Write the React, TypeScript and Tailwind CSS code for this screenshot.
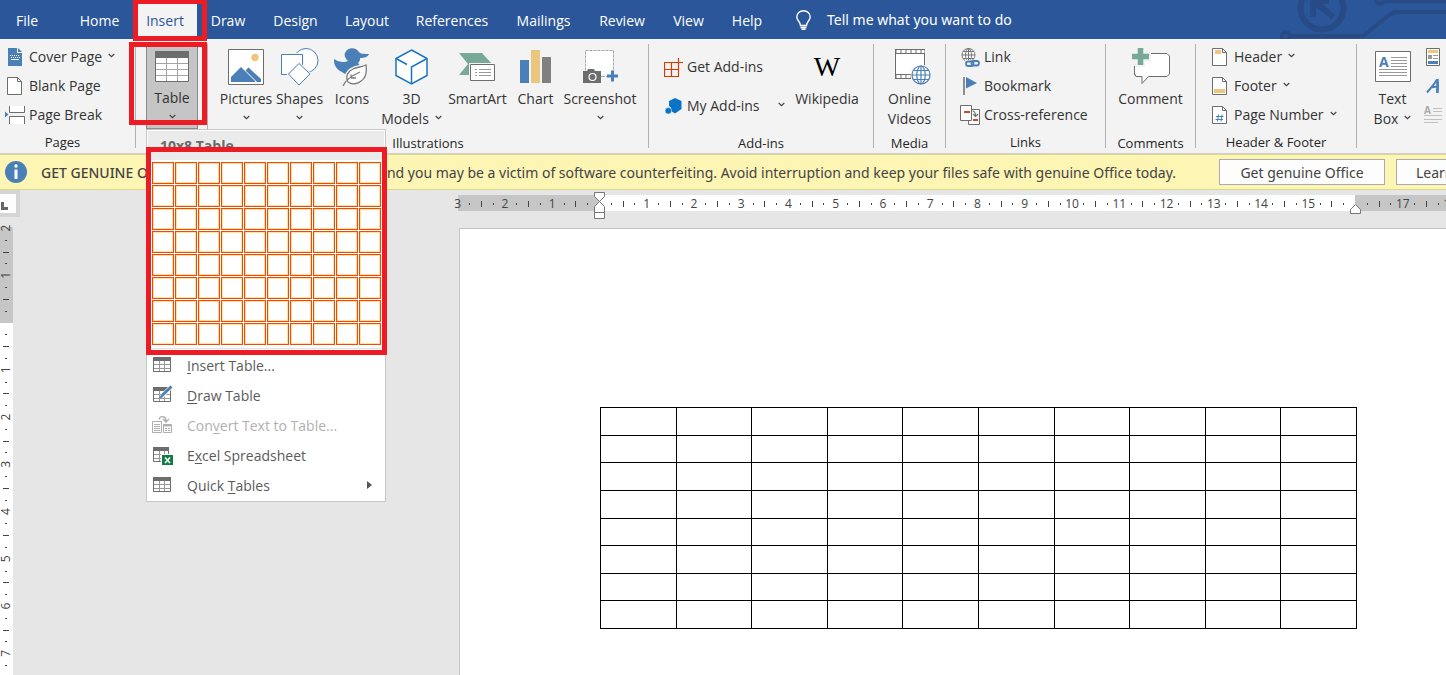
import React from "react";

type Kids = { children?: React.ReactNode };

const GREY = "#6d6d6d";
const BLUE = "#4a7fb8";
const AMBER = "#edc57c";
const GREEN = "#77a898";

function Chevron() {
  return (
    <svg className="mb-1" width="7" height="5" viewBox="0 0 7 5" fill="none" stroke="#444" strokeWidth="1.2" aria-hidden="true">
      <path d="M.7 1 3.5 3.6 6.3 1" />
    </svg>
  );
}

function Group({ label, className, children }: Kids & { label: string; className: string }) {
  return (
    <section aria-label={label || "Tables"} className={`relative my-[5px] flex shrink-0 flex-col border-[#b1b1b1] ${className}`}>
      <div className="flex h-[85px]">{children}</div>
      <div className="mt-1 text-center text-[13px] leading-5 text-[#262626]">{label}</div>
    </section>
  );
}

function BigButton({
  icon,
  lines,
  className,
  arrow,
}: {
  icon: React.ReactNode;
  lines: string[];
  className: string;
  arrow?: boolean;
}) {
  return (
    <button type="button" className={`flex shrink-0 flex-col items-center leading-5 ${className}`}>
      <span className="flex h-[45px] items-center">{icon}</span>
      <span>{lines[0]}</span>
      <span className="flex h-5 items-center gap-1.5">
        {lines[1] && <span>{lines[1]}</span>}
        {arrow && <Chevron />}
      </span>
    </button>
  );
}

function SmallButton({ icon, text, arrow }: { icon: React.ReactNode; text: string; arrow?: boolean }) {
  return (
    <button type="button" className="flex h-[26px] items-center gap-1 leading-5">
      <span className="flex w-5 justify-center">{icon}</span>
      <span>{text}</span>
      {arrow && (
        <span className="ml-0.5">
          <Chevron />
        </span>
      )}
    </button>
  );
}

function CoverPageIcon() {
  return (
    <svg width="14" height="18" viewBox="0 0 14 18">
      <path d="M0 0h9v5h5v13H0z" fill={BLUE} />
      <path d="M10 0l4 4h-4z" fill={BLUE} />
      <path d="M2 7.500h10M3 9.500h10" stroke="#fff" strokeDasharray="1 1" />
      <path d="M3 11.500h8" stroke="#fff" />
    </svg>
  );
}

function PageIcon({ children }: Kids) {
  return (
    <svg width="16" height="18" viewBox="0 0 16 18">
      <path d="M.5.5h10l4 4v13H.5z" fill="#fff" stroke={GREY} />
      <path d="M10.500.5v4h4" fill="none" stroke={GREY} />
      {children}
    </svg>
  );
}

function PageBreakIcon() {
  return (
    <svg width="20" height="18" viewBox="0 0 20 18">
      <path d="M0 5.500v6l3.500-3z" fill={BLUE} />
      <path d="M4.500 0v6.500h15V0M4.500 18v-7.500h15V18" fill="#fff" stroke={GREY} />
    </svg>
  );
}

function TableIcon() {
  return (
    <svg width="34" height="31" viewBox="0 0 34 31">
      <path d="M.5.500h33v30H.5z" fill="#fff" stroke={GREY} />
      <path d="M0 0h34v7H0z" fill={GREY} />
      <path d="M1 12.500h32M1 18.500h32M1 24.500h32M11.500 7v23M22.500 7v23" stroke="#a6a6a6" />
    </svg>
  );
}

function PicturesIcon() {
  return (
    <svg width="36" height="36" viewBox="0 0 36 36">
      <path d="M.5.500h35v35H.5z" fill="#fff" stroke={GREY} />
      <circle cx="27" cy="8.500" r="3.700" fill={AMBER} />
      <path d="M3 32v-4l10-10 14 14v1H3z" fill={BLUE} />
      <path d="M17.500 21.500l3-3L33 30v3h-4z" fill={BLUE} />
    </svg>
  );
}

function ShapesIcon() {
  return (
    <svg width="38" height="38" viewBox="0 0 38 38" fill="#fff" stroke={BLUE}>
      <circle cx="25" cy="12.500" r="12" />
      <path d="M.5 6.500h21v20H.5z" stroke="#f3f3f3" strokeWidth="3" />
      <path d="M.5 6.500h21v20H.5z" />
      <path d="M18 15.500l11 10.500-11 11L7.500 26z" stroke="#f3f3f3" strokeWidth="3" />
      <path d="M18 15.500l11 10.500-11 11L7.500 26z" />
    </svg>
  );
}

function DuckLeafIcon() {
  return (
    <svg width="36" height="38" viewBox="0 0 36 38">
      <path
        d="M0 11c4 3 10 4 14 2-3-3-4-6-3-8 2-6 11-6.500 14-1 .8 1.800 5 2 10 2-1 3-5 4-9 4 0 2 0 3-2 5 3 3 3 8-1 10-4 2.500-11 2.500-15-1C1 20.500 0 16 0 11z"
        fill={BLUE}
      />
      <path
        d="M14 34c-3-5 0-11 5-13 4-2 9-2 13-4 1 7 0 13-5 16-3 3-9 4-13 1z"
        fill="#fff"
        stroke="#f3f3f3"
        strokeWidth="4"
      />
      <path
        d="M14 34c-3-5 0-11 5-13 4-2 9-2 13-4 1 7 0 13-5 16-3 3-9 4-13 1zM9 38c2-5 8-10 17-14M17 29.500v-3M17 30h5"
        fill="#fff"
        stroke="#7a7a7a"
        strokeWidth="1.300"
      />
    </svg>
  );
}

function CubeIcon() {
  return (
    <svg width="33" height="36" viewBox="0 0 33 36" fill="#fff" stroke="#1b75c4" strokeWidth="1.500">
      <path d="M16.500 1 32 9.500v17L16.500 35 1 26.500v-17z" />
      <path d="M1 9.500l11 6M32 9.500 16.500 18v17" fill="none" />
    </svg>
  );
}

function SmartArtIcon() {
  return (
    <svg width="37" height="30" viewBox="0 0 37 30">
      <path d="M0 1h23l10 11-9 11H0l9-11z" fill={GREEN} />
      <path d="M10 11h27v19H10z" fill="#f3f3f3" />
      <path d="M11.500 12.500h24v16h-24z" fill="#fff" stroke={GREY} />
      <path d="M16 17.500h2M16 20.500h2M16 23.500h2M20 17.500h12M20 20.500h12M20 23.500h12" stroke="#999" />
    </svg>
  );
}

function ChartIcon() {
  return (
    <svg width="31" height="33" viewBox="0 0 31 33">
      <path d="M0 10h9v23H0z" fill={BLUE} />
      <path d="M11 0h9v33h-9z" fill="#ebc67d" />
      <path d="M22 7h9v26h-9z" fill="#808080" />
    </svg>
  );
}

function ScreenshotIcon() {
  return (
    <svg width="35" height="34" viewBox="0 0 35 34">
      <path d="M2.500.500h28v26h-28z" fill="#fff" stroke="#a6a6a6" strokeDasharray="3 1" />
      <path d="M20 24h15v6H20z" fill="#f3f3f3" />
      <path d="M19 26.500h5" stroke="#a6a6a6" strokeDasharray="3 1" />
      <path d="M0 21h4l1-2h6l1 2h6v12H0z" fill={GREY} />
      <circle cx="9.500" cy="27" r="3.500" fill={GREY} stroke="#fff" strokeWidth="1.200" />
      <path d="M24 26h11M29.500 20.500v11" stroke={BLUE} strokeWidth="3" />
    </svg>
  );
}

function GetAddinsIcon() {
  return (
    <svg width="19" height="19" viewBox="0 0 19 19" fill="none" stroke="#d83b01" strokeWidth="1.200">
      <path d="M7.500 4.500h-7v14h14v-7H.5M7.500 4.500v14M7.500 4.500H10M14.500 11.500V9M10 4.500h9M14.500 0v9" />
    </svg>
  );
}

function MyAddinsIcon() {
  return (
    <svg width="17" height="17" viewBox="0 0 17 17" fill="#0b73c7">
      <path d="M10 0l6.500 3v8L10 15.500 6 13V9.500L4 8V3z" />
      <circle cx="3.300" cy="12.800" r="3.300" stroke="#f3f3f3" strokeWidth=".6" />
    </svg>
  );
}

function OnlineVideosIcon() {
  return (
    <svg width="42" height="36" viewBox="-6 0 42 36">
      <path d="M.5.500h29v29H.5z" fill="#fff" />
      <path d="M.5 0v30M29.500 0v17" stroke={GREY} />
      <path d="M0 2.500h30M0 27.500h16" stroke={GREY} strokeWidth="5" />
      <path d="M1.500 2.500h28M1.500 27.500h14" stroke="#fff" strokeWidth="3" strokeDasharray="4 1" />
      <circle cx="26" cy="26" r="10.500" fill="#f3f3f3" />
      <g fill="#fff" stroke={BLUE} strokeWidth="1.200">
        <circle cx="26" cy="26" r="9" />
        <ellipse cx="26" cy="26" rx="4.200" ry="9" />
        <path d="M26 17v18M17 26h18M18.500 21.500h15M18.500 30.500h15" />
      </g>
    </svg>
  );
}

function LinkIcon() {
  return (
    <svg width="19" height="19" viewBox="0 0 19 19" fill="none">
      <g stroke="#777">
        <circle cx="7.500" cy="7" r="6.500" fill="#fff" />
        <ellipse cx="7.500" cy="7" rx="3" ry="6.500" />
        <path d="M7.500.500v13M1 7h13M2 3.500h11M2 10.500h11" />
      </g>
      <path d="M4 12h15v7H4z" fill="#f3f3f3" />
      <g stroke={BLUE} strokeWidth="1.800">
        <rect x="5" y="13.500" width="7.500" height="4.500" rx="2.200" />
        <rect x="10.500" y="13" width="7.500" height="4.500" rx="2.200" />
      </g>
    </svg>
  );
}

function BookmarkIcon() {
  return (
    <svg width="14" height="18" viewBox="0 0 14 18">
      <path d="M1 0v18" stroke={GREY} strokeWidth="1.500" />
      <path d="M3 0l11 6L3 11.500z" fill={BLUE} />
    </svg>
  );
}

function CrossRefIcon() {
  return (
    <svg width="20" height="20" viewBox="0 0 20 20">
      <path d="M8.500 4.500h11v15h-11z" fill="#fff" stroke={GREY} />
      <path d="M.5.500h11v15H.5z" fill="#fff" stroke={GREY} />
      <path d="M4 7h6M13 15h5" stroke="#d24726" strokeWidth="2" />
      <path d="M12.500 6c2 0 3 1 3 5M13 9l2.500 2.500L18 9" fill="none" stroke={GREY} strokeWidth="1.200" />
    </svg>
  );
}

function CommentIcon() {
  return (
    <svg width="38" height="37" viewBox="0 0 38 37">
      <path d="M4 5.500h31l2.500 2.500v18L35 28.500H16.500L10 35.500v-7H4L2.500 26V8z" fill="#fff" stroke={GREY} />
      <path d="M-1 4h20v10h-6v5H-1z" fill="#f3f3f3" />
      <path d="M2.500 18v8L4 28.500" fill="none" stroke={GREY} />
      <path d="M0 8.500h17M8.500 0v17" stroke={GREEN} strokeWidth="5.500" />
    </svg>
  );
}

function TextBoxIcon() {
  return (
    <svg width="36" height="31" viewBox="0 0 36 31">
      <path d="M.5.500h35v30H.5z" fill="#fff" stroke={GREY} />
      <path d="M16 6.500h16M16 9.500h16M16 12.500h16M16 15.500h16M4 18.500h28M4 21.500h28M4 24.500h28" stroke="#999" />
      <text x="4" y="16" className="font-['Open_Sans'] text-[14px] font-bold" fill={BLUE}>A</text>
    </svg>
  );
}

function QuickPartsIcon() {
  return (
    <svg width="14" height="18" viewBox="0 0 14 18">
      <path d="M.5.500h13v17H.5z" fill="#fff" stroke={GREY} />
      <path d="M2 2h10v3H2z" fill={AMBER} />
      <path d="M2 7h4v4H2z" fill="#999" />
      <path d="M7 7.500h5M7 10.500h5" stroke="#999" />
      <path d="M2 13h10v3H2z" fill={BLUE} />
    </svg>
  );
}

function WordArtIcon() {
  return (
    <svg width="15" height="16" viewBox="0 0 15 16" fill="none" stroke={BLUE}>
      <path d="M1 14.500C5 10 9 5 11 1.500M4.500 9.500l7-1" strokeWidth="2" />
      <path d="M11.300 1c.5 4 .5 9 0 14" strokeWidth="2.800" />
    </svg>
  );
}

function DropCapIcon() {
  return (
    <svg width="18" height="18" viewBox="0 0 18 18">
      <path d="M9 2.500h9M9 5.500h9M0 9.500h18M0 13.500h18M0 16.500h14" stroke="#c0c0c0" />
      <text x="0" y="8" className="font-['Open_Sans'] text-[10px] font-bold" fill="#aaa">A</text>
    </svg>
  );
}

function SmallTable({ cut, children }: Kids & { cut?: boolean }) {
  return (
    <svg className="ml-px" width="20" height="20" viewBox="0 0 20 20">
      <path d={cut ? "M.5 2.500h15v14H.5z" : "M.5 2.500h17v14H.5z"} fill="#fff" stroke={GREY} />
      <path d={cut ? "M0 2h16v4H0z" : "M0 2h18v4H0z"} fill={GREY} />
      <path d={cut ? "M1 9.500h14M1 13.500h14M6.500 6v10M11.500 6v10" : "M1 9.500h16M1 13.500h16M6.500 6v10M11.500 6v10"} stroke="#999" />
      {children}
    </svg>
  );
}

function ConvertIcon() {
  return (
    <svg width="20" height="20" viewBox="0 0 20 20" fill="none" stroke="#b0b0b0">
      <path d="M.5 6.500h9v11h-9zM2 9.500h6M2 11.500h6M2 13.500h6M2 15.500h6M11.500 9.500h8v8h-8zM13 13.500h2M16 13.500h2M13 15.500h2M16 15.500h2" />
      <path d="M11 10.500h9" strokeWidth="2" />
      <path d="M7 4.500C8 .5 14 .5 14 6M11 4l3 3 3-3" strokeWidth="1.400" />
    </svg>
  );
}

const tabs: { name: string; className: string }[] = [
  { name: "File", className: "w-[54px]" },
  { name: "Home", className: "ml-3 w-[67px]" },
  { name: "Insert", className: "w-16" },
  { name: "Draw", className: "w-[62px]" },
  { name: "Design", className: "w-[73px]" },
  { name: "Layout", className: "w-[70px]" },
  { name: "References", className: "w-[100px]" },
  { name: "Mailings", className: "w-[83px]" },
  { name: "Review", className: "w-[74px]" },
  { name: "View", className: "w-[59px]" },
  { name: "Help", className: "w-[58px]" },
];

function TitleBar() {
  return (
    <header className="relative flex h-[39px] shrink-0 items-stretch bg-[#2b579a] text-white">
      <svg className="absolute top-0 right-0" width="170" height="39" viewBox="0 0 170 39" fill="none" stroke="#274b85" strokeWidth="4">
        <circle cx="46" cy="8" r="21.500" strokeWidth="6" />
        <path d="M37 17V1h16M39 2l18 15" strokeWidth="6" />
        <circle cx="10" cy="36" r="4" />
        <path d="M14 36h73l26-21q4-3 9-3h48" />
        <circle cx="104" cy="0" r="4" />
        <path d="M108 1h62" />
      </svg>
      <nav className="flex" aria-label="Ribbon tabs">
        {tabs.map((t) =>
          t.name === "Insert" ? (
            <button key={t.name} type="button" className={`relative bg-[#f3f3f3] pt-0.5 text-[#2b579a] ${t.className}`}>
              {t.name}
              <span className="absolute -right-2.5 -bottom-0.5 left-0 top-0 z-10 border-[5px] border-t-4 border-[#ed1c24]" />
            </button>
          ) : (
            <button key={t.name} type="button" className={`pt-0.5 ${t.className}`}>
              {t.name}
            </button>
          ),
        )}
      </nav>
      <button type="button" className="ml-5 flex items-center gap-4">
        <svg width="15" height="20" viewBox="0 0 15 20" fill="none" stroke="#fff" strokeWidth="1.400">
          <path d="M4.500 15.500c0-4-3.700-4.500-3.700-8.500a6.700 6.300 0 0 1 13.400 0c0 4-3.700 4.500-3.700 8.500zM4.500 17.500h6M5.500 19.300h4" />
        </svg>
        <span className="font-['Noto_Sans',sans-serif]">Tell me what you want to do</span>
      </button>
    </header>
  );
}

const gridCells = Array.from({ length: 80 }, (_, i) => i);

function MenuItem({
  icon,
  before,
  hot,
  after,
  disabled,
  submenu,
}: {
  icon: React.ReactNode;
  before?: string;
  hot: string;
  after: string;
  disabled?: boolean;
  submenu?: boolean;
}) {
  return (
    <button
      type="button"
      role="menuitem"
      disabled={disabled}
      className="flex h-[30px] w-full items-center pr-3 pl-[5px] text-left text-[#5b5b5b] disabled:text-[#b1b1b1]"
    >
      <span className="w-[35px]">{icon}</span>
      <span className="flex-1">
        {before}
        <u className="underline-offset-2">{hot}</u>
        {after}
      </span>
      {submenu && (
        <svg width="6" height="8" viewBox="0 0 6 8">
          <path d="M0 0l5 4-5 4z" fill="#555" />
        </svg>
      )}
    </button>
  );
}

function TableMenu() {
  return (
    <div role="menu" className="absolute top-[85px] left-[10px] z-20 w-60 border border-[#c6c6c6] bg-white pb-px">
      <div className="m-px mb-0 h-[29px] bg-[#ebebeb] pl-3 leading-[30px] font-bold text-[#6a6a6a]">10x8 Table</div>
      <div className="grid grid-cols-10 gap-px pt-[2px] pr-1 pb-[2px] pl-[5px]">
        {gridCells.map((c) => (
          <span key={c} className="h-[22px] border border-[#ef4810] bg-white inset-ring inset-ring-[#ffe294]" />
        ))}
      </div>
      <div className="mt-px mb-px border-t border-[#e1e1e1]" />
      <MenuItem icon={<SmallTable />} hot="I" after="nsert Table..." />
      <MenuItem
        icon={
          <SmallTable>
            <path d="M7 13l1-4L17 0l3 3-9 9z" fill="#fff" />
            <path d="M6.500 13.500l1.500-4 2.500 2.500z" fill={BLUE} />
            <path d="M9 10.500 18.500 1.500" stroke={BLUE} strokeWidth="3" />
          </SmallTable>
        }
        hot="D"
        after="raw Table"
      />
      <MenuItem icon={<ConvertIcon />} before="Con" hot="v" after="ert Text to Table..." disabled />
      <MenuItem
        icon={
          <SmallTable cut>
            <path d="M8 9h12v11H8z" fill="#fff" />
            <path d="M9 10h11v10H9z" fill="#107c41" />
            <path d="M12 12.500l5 5.500M17 12.500 12 18" stroke="#fff" strokeWidth="1.600" />
          </SmallTable>
        }
        before="E"
        hot="x"
        after="cel Spreadsheet"
      />
      <MenuItem icon={<SmallTable />} before="Quick " hot="T" after="ables" submenu />
      <span className="pointer-events-none absolute -right-0.5 -left-px top-[17px] h-[208px] border-[5px] border-[#ed1c24]" />
    </div>
  );
}

function Ribbon() {
  return (
    <div className="flex h-[115px] shrink-0 border-b border-[#d2d0ce] bg-[#f3f3f3]">
      <Group label="Pages" className="w-[136px] border-r pr-2.5">
        <div className="flex flex-col gap-[3px] pl-[5px]">
          <SmallButton icon={<CoverPageIcon />} text="Cover Page" arrow />
          <SmallButton icon={<PageIcon />} text="Blank Page" />
          <SmallButton icon={<PageBreakIcon />} text="Page Break" />
        </div>
      </Group>
      <Group label="" className="w-[72px] border-r">
        <BigButton icon={<TableIcon />} lines={["Table"]} arrow className="ml-[10px] w-[52px] border border-t-0 border-[#8a8a8a] bg-[#c5c5c5]" />
        <span className="pointer-events-none absolute -top-0.5 right-0 left-[-7px] z-10 h-[83px] border-[5px] border-[#ed1c24]" />
        <TableMenu />
      </Group>
      <Group label="Illustrations" className="w-[441px] border-r">
        <BigButton icon={<PicturesIcon />} lines={["Pictures"]} arrow className="ml-[11px] w-[54px]" />
        <BigButton icon={<ShapesIcon />} lines={["Shapes"]} arrow className="w-[53px]" />
        <BigButton icon={<DuckLeafIcon />} lines={["Icons"]} className="w-[52px]" />
        <BigButton icon={<CubeIcon />} lines={["3D", "Models"]} arrow className="w-[67px]" />
        <BigButton icon={<SmartArtIcon />} lines={["SmartArt"]} className="w-[65px]" />
        <BigButton icon={<ChartIcon />} lines={["Chart"]} className="w-[51px]" />
        <BigButton icon={<ScreenshotIcon />} lines={["Screenshot"]} arrow className="w-[78px]" />
      </Group>
      <Group label="Add-ins" className="w-[225px] border-r">
        <div className="flex w-[136px] flex-col gap-[13px] pt-[10px] pl-[14px]">
          <SmallButton icon={<GetAddinsIcon />} text="Get Add-ins" />
          <div className="flex items-center justify-between">
            <SmallButton icon={<MyAddinsIcon />} text="My Add-ins" />
            <Chevron />
          </div>
        </div>
        <BigButton
          icon={<span className="font-['Liberation_Serif',serif] text-[28px] leading-7 text-black">W</span>}
          lines={["Wikipedia"]}
          className="ml-[5px] w-[74px]"
        />
      </Group>
      <Group label="Media" className="w-[72px] border-r">
        <BigButton icon={<OnlineVideosIcon />} lines={["Online", "Videos"]} className="w-[71px]" />
      </Group>
      <Group label="Links" className="w-[160px] border-r">
        <div className="flex flex-col gap-[3px] pl-[14px]">
          <SmallButton icon={<LinkIcon />} text="Link" />
          <SmallButton icon={<BookmarkIcon />} text="Bookmark" />
          <SmallButton icon={<CrossRefIcon />} text="Cross-reference" />
        </div>
      </Group>
      <Group label="Comments" className="w-[90px] border-r">
        <BigButton icon={<CommentIcon />} lines={["Comment"]} className="w-[89px]" />
      </Group>
      <Group label="Header & Footer" className="w-[161px] border-r">
        <div className="flex flex-col gap-[3px] pl-[14px]">
          <SmallButton icon={<PageIcon><path d="M3 2h6v4H3z" fill={AMBER} /></PageIcon>} text="Header" arrow />
          <SmallButton icon={<PageIcon><path d="M2 12h11v4H2z" fill={AMBER} /></PageIcon>} text="Footer" arrow />
          <SmallButton
            icon={<PageIcon><path d="M6.500 8.500l-1 7M10 8.500l-1 7M4 10.500h7.500M3.500 13.500H11" stroke={BLUE} /></PageIcon>}
            text="Page Number"
            arrow
          />
        </div>
      </Group>
      <Group label="" className="flex-1">
        <BigButton icon={<TextBoxIcon />} lines={["Text", "Box"]} arrow className="ml-[7px] w-[57px]" />
        <div className="flex shrink-0 flex-col gap-[3px] pl-[3px]">
          <button type="button" aria-label="Quick Parts" className="flex h-[26px] items-center pl-0.5">
            <QuickPartsIcon />
          </button>
          <button type="button" aria-label="WordArt" className="flex h-[26px] items-center pl-0.5">
            <WordArtIcon />
          </button>
          <button type="button" aria-label="Drop Cap" className="flex h-[26px] items-center">
            <DropCapIcon />
          </button>
        </div>
      </Group>
    </div>
  );
}

function MessageBar() {
  return (
    <div className="flex h-9 shrink-0 items-center border-y border-[#dad78e] bg-[#fdf5b4] pl-[5px] font-['Noto_Sans',sans-serif] whitespace-nowrap text-[#444]">
      <svg width="22" height="22" viewBox="0 0 22 22" className="shrink-0">
        <circle cx="11" cy="11" r="11" fill={BLUE} />
        <circle cx="11" cy="5" r="1.700" fill="#fff" />
        <path d="M11 8.500V18" stroke="#fff" strokeWidth="3" />
      </svg>
      <span className="ml-[14px] w-[150px] shrink-0 font-medium">GET GENUINE OFFICE</span>
      <span className="flex w-[985px] shrink-0 justify-end">
        Your license isn't genuine, and you may be a victim of software counterfeiting. Avoid interruption and keep your files safe with
        genuine Office today.
      </span>
      <button type="button" className="ml-[43px] h-[26px] w-[166px] shrink-0 border border-[#ababab] bg-[#fdfdfd]">
        Get genuine Office
      </button>
      <button type="button" className="ml-[11px] h-[26px] shrink-0 border border-[#ababab] bg-[#fdfdfd] px-[19px]">
        Learn more
      </button>
    </div>
  );
}

const UNIT = 47.25;

function HorizontalRuler() {
  const zero = 141;
  const marks = Array.from({ length: 88 }, (_, i) => i - 12);
  return (
    <svg className="block h-[38px] w-full overflow-visible" aria-label="Horizontal ruler">
      <rect x="0" y="5" width="100%" height="16" fill="#c6c6c6" />
      <rect x={zero} y="5" width={UNIT * 16} height="16" fill="#fff" />
      {marks.map((m) => {
        const x = zero + (m * UNIT) / 4;
        if (m === 0 || m === 64) return null;
        if (m % 4 === 0)
          return (
            <text key={m} x={x + 0.5} y="18" textAnchor="middle" className="text-[12px]" fill="#444">
              {Math.abs(m / 4)}
            </text>
          );
        const half = m % 2 === 0 ? 3 : 1;
        return <rect key={m} x={Math.round(x)} y={14 - half} width="1" height={half * 2} fill="#444" />;
      })}
      <g fill="#fff" stroke="#777">
        <path d="M136.500 2.500h10v4l-5 5-5-5z" />
        <path d="M141.500 11.500l5 5v6h-10v-6zM136.500 22.500h10v6h-10z" />
        <path d="M897.500 14.500l5 5v4h-10v-4z" />
      </g>
    </svg>
  );
}

function VerticalRuler() {
  const zero = 96;
  const marks = Array.from({ length: 38 }, (_, i) => i - 8);
  return (
    <svg className="mt-[10px] block min-h-0 w-[13px] flex-1 overflow-visible" aria-label="Vertical ruler">
      <rect x="0" y="0" width="13" height="100%" fill="#fff" />
      <rect x="0" y="0" width="13" height={zero} fill="#c6c6c6" />
      {marks.map((m) => {
        const y = zero + (m * UNIT) / 4 - 0.5;
        if (m === 0) return null;
        if (m % 4 === 0)
          return (
            <text key={m} x="10" y={y} transform={`rotate(-90 10 ${y})`} textAnchor="middle" className="text-[12px]" fill="#444">
              {Math.abs(m / 4)}
            </text>
          );
        const half = m % 2 === 0 ? 3 : 1;
        return <rect key={m} x={6 - half} y={Math.round(y)} width={half * 2} height="1" fill="#444" />;
      })}
    </svg>
  );
}

const rows = Array.from({ length: 8 }, (_, i) => i);
const cols = Array.from({ length: 10 }, (_, i) => i);

function Workspace() {
  return (
    <main className="flex min-h-0 flex-1 bg-[#e6e6e6]">
      <div className="flex w-[458px] shrink-0 flex-col">
        <div className="h-[27px] w-5 border-[#d5d5d5] border-t-4 border-r-4 border-b-4 bg-[#fdfdfd]">
          <svg width="16" height="19" viewBox="0 0 16 19">
            <path d="M2.500 8v6.500H8" fill="none" stroke="#666" strokeWidth="3" />
          </svg>
        </div>
        <VerticalRuler />
      </div>
      <div className="flex min-w-0 flex-1 flex-col">
        <HorizontalRuler />
        <article className="ml-px flex-1 border-t border-l border-[#c6c6c6] bg-white pt-[178px] pl-[140px]">
          <table className="h-[222px] w-[757px] table-fixed border-collapse">
            <tbody>
              {rows.map((r) => (
                <tr key={r}>
                  {cols.map((c) => (
                    <td key={c} className="border border-black" />
                  ))}
                </tr>
              ))}
            </tbody>
          </table>
        </article>
      </div>
    </main>
  );
}

export default function App() {
  return (
    <div className="flex h-screen flex-col overflow-hidden bg-[#e6e6e6] font-['Open_Sans','Noto_Sans',sans-serif] text-[14px] text-[#333]">
      <TitleBar />
      <Ribbon />
      <MessageBar />
      <Workspace />
    </div>
  );
}
